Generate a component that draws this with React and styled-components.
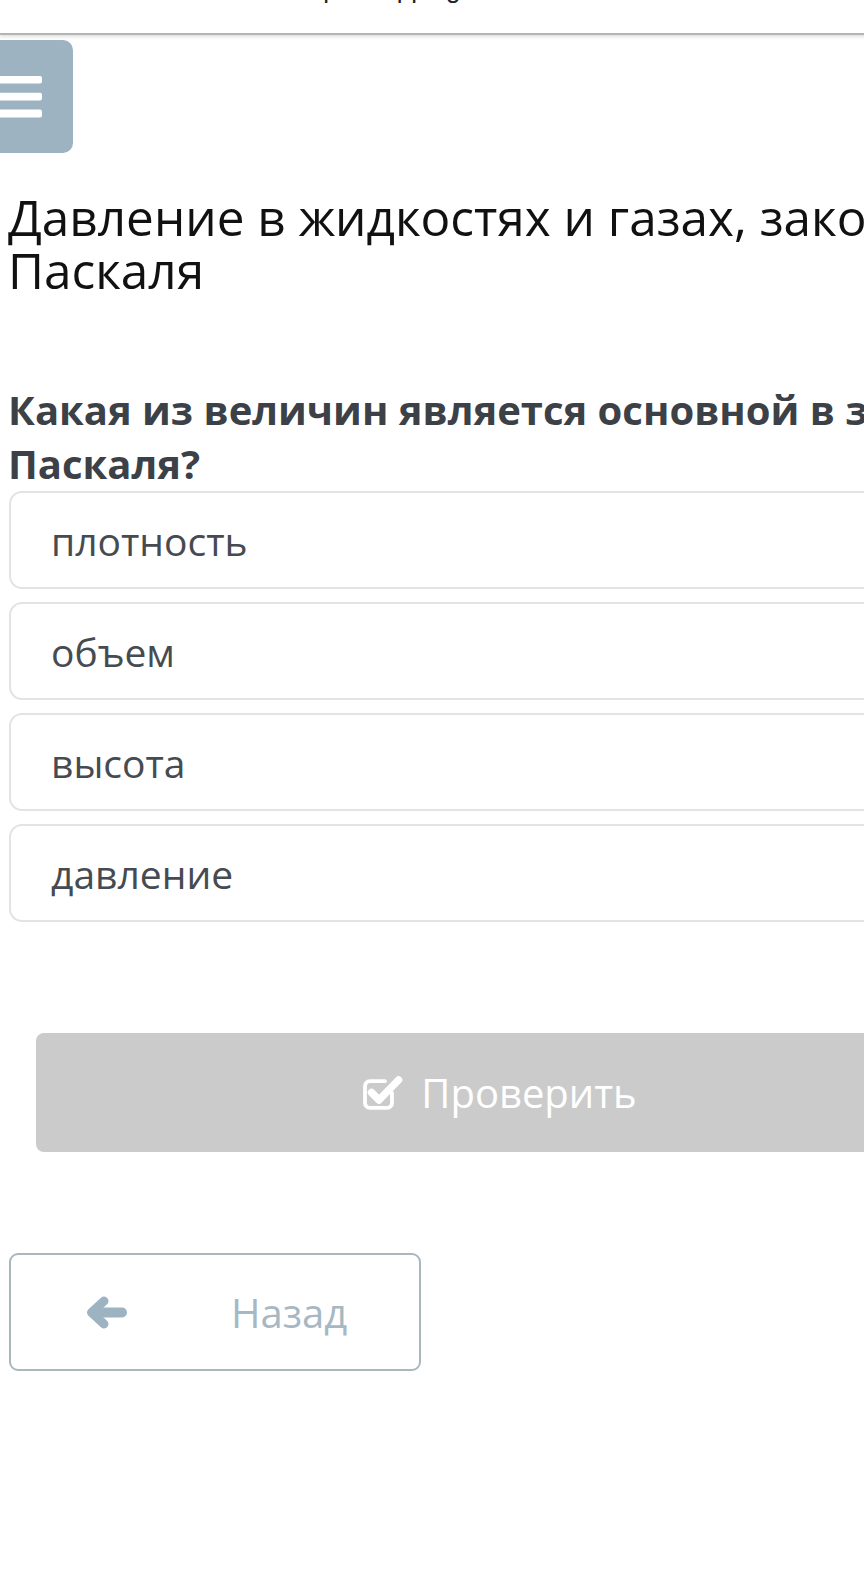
import React from 'react';
import styled, { createGlobalStyle } from 'styled-components';

const GlobalStyle = createGlobalStyle`
	html, body {
		margin: 0;
		padding: 0;
		background: #ffffff;
		overflow: hidden;
	}
	body {
		font-family: "Open Sans", "Noto Sans", sans-serif;
	}
`;

const Page = styled.div`
	width: 1000px;
	min-height: 1584px;
	background: #ffffff;
`;

const TopBar = styled.div`
	height: 33px;
	padding-left: 170px;
	border-bottom: 2px solid #b4b4b4;
	box-shadow: 0 2px 3px rgba(0, 0, 0, 0.12);
	overflow: hidden;
`;

const UrlText = styled.div`
	margin-top: -24px;
	font-family: "Liberation Sans", Arial, sans-serif;
	font-size: 26px;
	line-height: 1;
	color: #222222;
	white-space: nowrap;
`;

const Main = styled.main`
	padding: 0 8px;
`;

const MenuButton = styled.button`
	display: flex;
	align-items: center;
	justify-content: flex-end;
	box-sizing: border-box;
	width: 90px;
	height: 113px;
	margin: 5px 0 0 -25px;
	padding: 0 31px 0 0;
	border: none;
	border-radius: 10px;
	background: #9db3c2;
`;

const Title = styled.h1`
	margin: 38px 0 0;
	font-size: 49.5px;
	font-weight: 400;
	line-height: 53px;
	color: #111111;
	white-space: nowrap;
`;

const Question = styled.h2`
	margin: 86px 0 0;
	font-size: 40px;
	font-weight: 700;
	line-height: 54px;
	color: #3c4147;
	white-space: nowrap;
`;

const Options = styled.div`
	display: flex;
	flex-direction: column;
	gap: 13px;
`;

const Option = styled.label`
	display: flex;
	align-items: center;
	box-sizing: border-box;
	height: 98px;
	margin-left: 1px;
	padding-left: 40px;
	border: 2px solid #e3e3e3;
	border-radius: 13px;
	font-size: 39px;
	color: #464b51;
`;

const CheckButton = styled.button`
	display: flex;
	align-items: center;
	justify-content: center;
	gap: 18px;
	box-sizing: border-box;
	width: calc(100% - 56px);
	height: 119px;
	margin: 111px 28px 0;
	border: none;
	border-radius: 8px;
	background: #cbcbcb;
	font-family: "Open Sans", sans-serif;
	font-size: 40px;
	color: #ffffff;
`;

const BackButton = styled.button`
	display: flex;
	align-items: center;
	gap: 104px;
	box-sizing: border-box;
	width: 412px;
	height: 118px;
	margin: 101px 0 0 1px;
	padding: 0 0 0 75px;
	border: 2px solid #aab7bf;
	border-radius: 9px;
	background: #ffffff;
	font-family: "Open Sans", sans-serif;
	font-size: 40px;
	color: #a6b8c3;
`;

const BarsIcon = () => (
	<svg width="44" height="42" viewBox="0 0 44 42">
		<rect x="0" y="0" width="44" height="7.6" rx="2" fill="#ffffff" />
		<rect x="0" y="16.8" width="44" height="7.6" rx="2" fill="#ffffff" />
		<rect x="0" y="33.6" width="44" height="8" rx="2" fill="#ffffff" />
	</svg>
);

const CheckSquareIcon = () => (
	<svg width="40" height="34" viewBox="0 0 40 34">
		<path
			d="M29 17 V27 a4.8 4.8 0 0 1 -4.8 4.8 H6.8 a4.8 4.8 0 0 1 -4.8 -4.8 V10 a4.8 4.8 0 0 1 4.8 -4.8 H22"
			fill="none"
			stroke="#ffffff"
			strokeWidth="3.8"
			strokeLinecap="round"
		/>
		<path
			d="M8.5 16.5 L16 24 L35.5 4"
			fill="none"
			stroke="#ffffff"
			strokeWidth="7.5"
			strokeLinecap="round"
			strokeLinejoin="round"
		/>
	</svg>
);

const ArrowLeftIcon = () => (
	<svg width="41" height="33" viewBox="0 0 41 33">
		<path
			d="M7 16.5 H36"
			stroke="#9db3c2"
			strokeWidth="10"
			strokeLinecap="round"
		/>
		<path
			d="M18 5 L5.5 16.5 L18 28"
			fill="none"
			stroke="#9db3c2"
			strokeWidth="9"
			strokeLinecap="round"
			strokeLinejoin="round"
		/>
	</svg>
);

const answers = ['плотность', 'объем', 'высота', 'давление'];

export default function App() {
	return (
		<Page>
			<GlobalStyle />
			<TopBar>
				<UrlText>Online Mektep - mapping</UrlText>
			</TopBar>

			<Main>
				<MenuButton aria-label="Меню">
					<BarsIcon />
				</MenuButton>

				<Title>
					Давление в жидкостях и газах, закон
					<br />
					Паскаля
				</Title>

				<Question>
					Какая из величин является основной в законе
					<br />
					Паскаля?
				</Question>

				<Options>
					{answers.map(answer => (
						<Option key={answer}>{answer}</Option>
					))}
				</Options>

				<CheckButton>
					<CheckSquareIcon />
					Проверить
				</CheckButton>

				<BackButton>
					<ArrowLeftIcon />
					Назад
				</BackButton>
			</Main>
		</Page>
	);
}
